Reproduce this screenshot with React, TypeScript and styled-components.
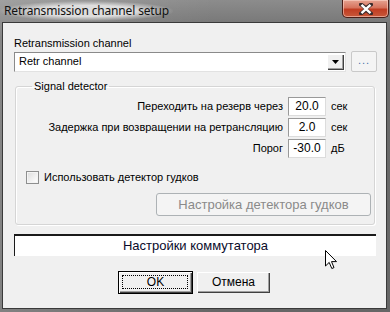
import React from 'react';
import styled, { createGlobalStyle } from 'styled-components';

const GlobalStyle = createGlobalStyle`
  html, body {
    margin: 0;
    padding: 0;
    background: #6e6e6e;
  }
  body {
    font-family: "Liberation Sans", Arial, sans-serif;
    font-size: 11px;
    color: #000;
  }
`;

const Window = styled.div`
  position: relative;
  width: 390px;
  height: 312px;
  display: flex;
  flex-direction: column;
  overflow: hidden;
  background:
    linear-gradient(90deg, rgba(255, 255, 255, 0.18), rgba(255, 255, 255, 0) 55%),
    linear-gradient(180deg, #8c8c8c 0%, #6c6c6c 12%, #666 100%);
`;

const TitleBar = styled.div`
  height: 22px;
  display: flex;
  align-items: flex-start;
  flex-shrink: 0;
`;

const TitleText = styled.div`
  margin: 1px 0 0 0;
  padding: 2px 4px 3px 4px;
  font-family: "Noto Sans", "Open Sans", sans-serif;
  font-size: 12px;
  line-height: 15px;
  letter-spacing: -0.15px;
  color: #111;
  background: radial-gradient(ellipse at center, rgba(235, 235, 235, 0.85) 40%, rgba(235, 235, 235, 0) 72%);
`;

const CloseButton = styled.div`
  margin-left: auto;
  margin-right: 1px;
  width: 47px;
  height: 18px;
  box-sizing: border-box;
  border: 1px solid #4a1d16;
  border-top: none;
  border-radius: 0 0 5px 5px;
  background: linear-gradient(180deg, #e6a391 0%, #d6735d 45%, #c13d22 55%, #c8583a 100%);
  box-shadow: inset 0 0 0 1px rgba(255, 220, 210, 0.55);
  display: flex;
  align-items: center;
  justify-content: center;
`;

const Client = styled.div`
  flex: 1;
  margin: 0 3px 3px 2px;
  border: 1px solid #3a3a3a;
  background: #f0f0f0;
  padding: 14px 0 0 11px;
  display: flex;
  flex-direction: column;
  align-items: flex-start;
`;

const Label = styled.div`
  line-height: 13px;
`;

const ComboRow = styled.div`
  margin-top: 1px;
  display: flex;
  align-items: center;
  gap: 5px;
  height: 21px;
`;

const Combo = styled.div`
  width: 332px;
  height: 20px;
  box-sizing: border-box;
  background: #fff;
  border: 1px solid;
  border-color: #8a8a8a #e2e2e2 #e2e2e2 #8a8a8a;
  display: flex;
  align-items: center;
  padding: 0 1px 0 4px;
`;

const ComboText = styled.span`
  flex: 1;
  line-height: 13px;
`;

const DropButton = styled.div`
  width: 17px;
  height: 16px;
  box-sizing: border-box;
  background: #f0f0f0;
  box-shadow: inset 1px 1px 0 #fff, inset -1px -1px 0 #404040, inset -2px -2px 0 #a0a0a0;
  display: flex;
  align-items: center;
  justify-content: center;
`;

const EllipsisButton = styled.div`
  width: 26px;
  height: 21px;
  box-sizing: border-box;
  border: 1px solid #c9c9c9;
  border-radius: 2px;
  background: #f4f4f4;
  color: #4b72a8;
  font-size: 11px;
  line-height: 17px;
  text-align: center;
  letter-spacing: 1px;
`;

const Group = styled.fieldset`
  margin: 8px 0 0 1px;
  width: 360px;
  box-sizing: border-box;
  border: 1px solid #d5d5d5;
  border-radius: 3px;
  box-shadow: inset 1px 1px 0 #fff, 1px 1px 0 #fff;
  padding: 4px 3px 8px 10px;
  display: flex;
  flex-direction: column;
`;

const Legend = styled.legend`
  margin-left: 6px;
  padding: 0 2px;
  line-height: 13px;
`;

const Fields = styled.div`
  display: grid;
  grid-template-columns: 1fr 38px 40px;
  grid-auto-rows: 19px;
  column-gap: 5px;
  row-gap: 2px;
  align-items: center;
`;

const FieldLabel = styled.span`
  text-align: right;
  line-height: 13px;
`;

const NumberBox = styled.div`
  height: 19px;
  box-sizing: border-box;
  background: #fff;
  border: 1px solid;
  border-color: #999 #dcdcdc #dcdcdc #999;
  text-align: center;
  line-height: 16px;
  font-size: 12px;
`;

const Unit = styled.span`
  line-height: 13px;
`;

const CheckRow = styled.label`
  margin-top: 13px;
  display: flex;
  align-items: center;
  gap: 5px;
  line-height: 13px;
`;

const CheckBox = styled.span`
  width: 13px;
  height: 13px;
  box-sizing: border-box;
  border: 1px solid #8e8f8f;
  background: linear-gradient(135deg, #dcdcdc 0%, #f6f6f6 70%, #fff 100%);
  box-shadow: inset 0 0 0 1px #f4f4f4;
`;

const DisabledButton = styled.div`
  margin-top: 9px;
  align-self: flex-end;
  width: 215px;
  height: 23px;
  box-sizing: border-box;
  border: 1px solid #adb2b5;
  border-radius: 3px;
  background: #f4f4f4;
  color: #8a8a8a;
  font-size: 13px;
  line-height: 21px;
  text-align: center;
`;

const StaticBox = styled.div`
  margin-top: 9px;
  width: 362px;
  height: 22px;
  box-sizing: border-box;
  background: #fff;
  border-style: solid;
  border-width: 2px 0 0 1px;
  border-color: #1a1a1a;
  font-size: 13px;
  line-height: 19px;
  text-align: center;
  color: #0a0a2a;
`;

const ButtonRow = styled.div`
  margin-top: 15px;
  align-self: stretch;
  padding-right: 11px;
  display: flex;
  justify-content: center;
  gap: 3px;
`;

const ClassicButton = styled.div<{ $default?: boolean }>`
  position: relative;
  width: 75px;
  height: 23px;
  box-sizing: border-box;
  background: #f0f0f0;
  border: 1px solid ${(p) => (p.$default ? '#000' : 'transparent')};
  box-shadow: inset 1px 1px 0 #fff, inset -1px -1px 0 #404040, inset -2px -2px 0 #a0a0a0;
  font-size: 12px;
  line-height: 20px;
  text-align: center;

  &::after {
    content: '';
    display: ${(p) => (p.$default ? 'block' : 'none')};
    position: absolute;
    inset: 3px 4px 4px 3px;
    border: 1px dotted #000;
  }
`;

const Pointer = styled.svg`
  position: absolute;
  left: 325px;
  top: 250px;
`;

export default function App() {
  return (
    <>
      <GlobalStyle />
      <Window>
        <TitleBar>
          <TitleText>Retransmission channel setup</TitleText>
          <CloseButton>
            <svg width="14" height="12" viewBox="0 0 14 12">
              <path
                d="M2 1.5 L7 5.2 L12 1.5 M2 10.5 L7 6.8 L12 10.5"
                stroke="#3a2a2a"
                strokeWidth="4"
                fill="none"
                strokeLinecap="round"
              />
              <path
                d="M2.5 1.8 L11.5 10.2 M11.5 1.8 L2.5 10.2"
                stroke="#fff"
                strokeWidth="2.4"
                fill="none"
              />
            </svg>
          </CloseButton>
        </TitleBar>
        <Client>
          <Label>Retransmission channel</Label>
          <ComboRow>
            <Combo>
              <ComboText>Retr channel</ComboText>
              <DropButton>
                <svg width="7" height="4" viewBox="0 0 7 4">
                  <path d="M0 0 H7 L3.5 4 Z" fill="#000" />
                </svg>
              </DropButton>
            </Combo>
            <EllipsisButton>...</EllipsisButton>
          </ComboRow>
          <Group>
            <Legend>Signal detector</Legend>
            <Fields>
              <FieldLabel>Переходить на резерв через</FieldLabel>
              <NumberBox>20.0</NumberBox>
              <Unit>сек</Unit>
              <FieldLabel>Задержка при возвращении на ретрансляцию</FieldLabel>
              <NumberBox>2.0</NumberBox>
              <Unit>сек</Unit>
              <FieldLabel>Порог</FieldLabel>
              <NumberBox>-30.0</NumberBox>
              <Unit>дБ</Unit>
            </Fields>
            <CheckRow>
              <CheckBox />
              Использовать детектор гудков
            </CheckRow>
            <DisabledButton>Настройка детектора гудков</DisabledButton>
          </Group>
          <StaticBox>Настройки коммутатора</StaticBox>
          <ButtonRow>
            <ClassicButton $default>OK</ClassicButton>
            <ClassicButton>Отмена</ClassicButton>
          </ButtonRow>
        </Client>
        <Pointer width="13" height="20" viewBox="0 0 13 20">
          <path
            d="M0.5 0.5 L0.5 16 L4.2 12.4 L6.8 18.5 L9 17.6 L6.5 11.6 L11.5 11.6 Z"
            fill="#fff"
            stroke="#000"
            strokeWidth="1"
            strokeLinejoin="miter"
          />
        </Pointer>
      </Window>
    </>
  );
}
